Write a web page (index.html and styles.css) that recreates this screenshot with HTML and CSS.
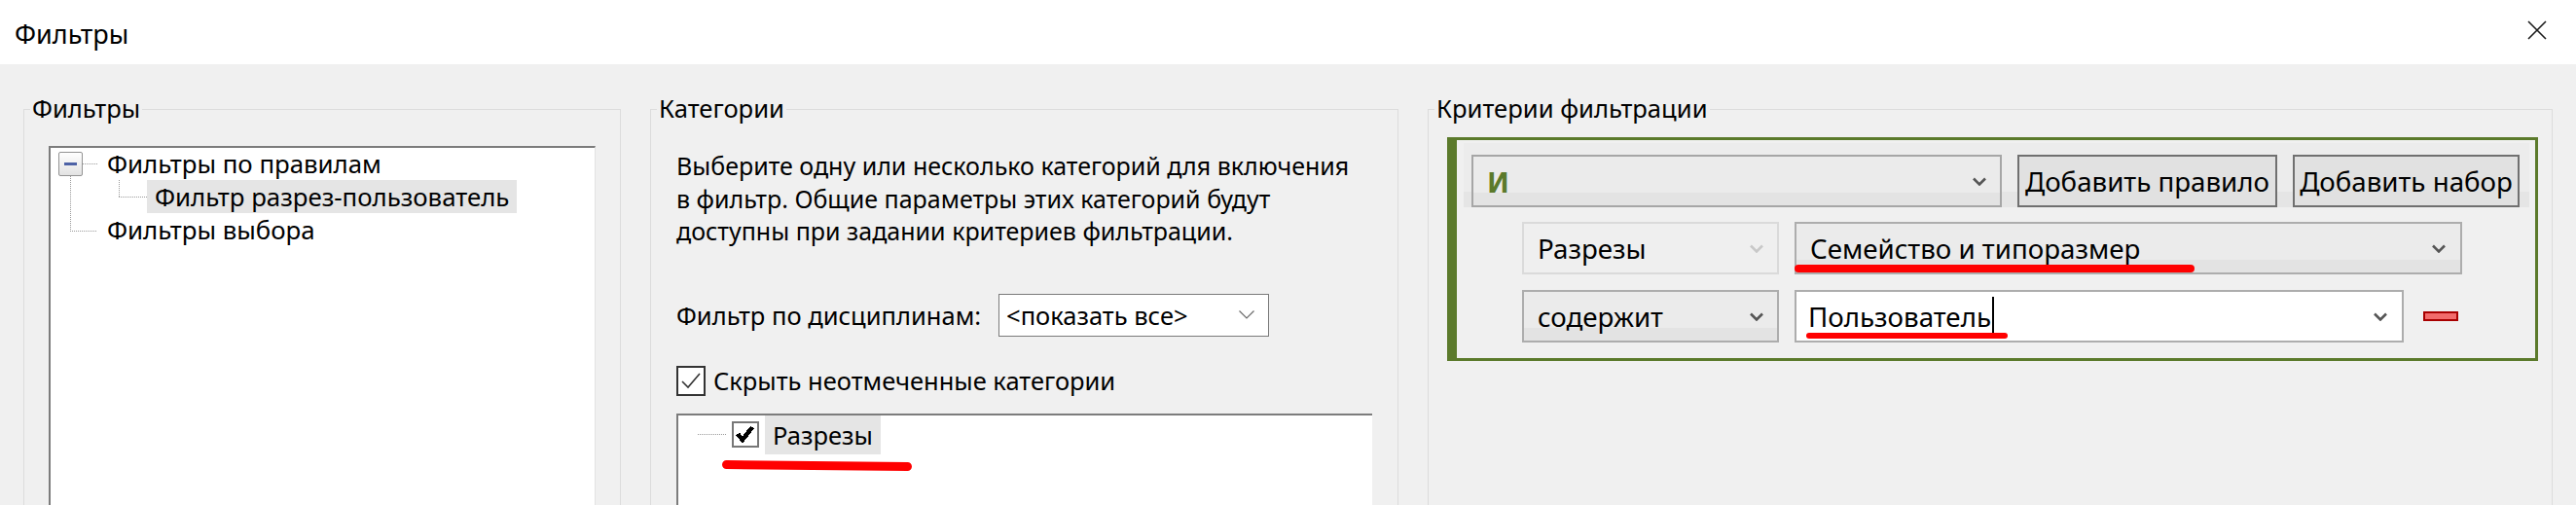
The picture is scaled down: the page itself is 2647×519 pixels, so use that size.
FILE: index.html
```html
<!DOCTYPE html>
<html lang="ru">
<head>
  <meta charset="UTF-8" />
  <title>Фильтры</title>
  <link rel="stylesheet" href="styles.css">
</head>
<body>

  <!-- Window caption -->
  <header class="titlebar">
    <span class="title">Фильтры</span>
    <button class="close" title="Закрыть">
      <svg width="20" height="20" viewBox="0 0 20 20"><path d="M1 1L19 19M19 1L1 19" stroke="#1b1b1b" stroke-width="1.6"/></svg>
    </button>
  </header>

  <main class="panes">

    <!-- Filters tree -->
    <fieldset class="group group-filters">
      <legend>Фильтры</legend>
      <div class="tree">
        <div class="tree-row">
          <svg class="gutter" width="58" height="34" viewBox="0 0 58 34">
            <defs>
              <linearGradient id="exp" x1="0" y1="0" x2="0" y2="1">
                <stop offset="0" stop-color="#ffffff"/>
                <stop offset="1" stop-color="#e2e2e2"/>
              </linearGradient>
            </defs>
            <path d="M33 17.5H48M20.5 30V34" stroke="#9a9a9a" stroke-dasharray="1 1"/>
            <rect x="8.5" y="5.5" width="24" height="24" rx="1.5" fill="url(#exp)" stroke="#939393"/>
            <rect x="14" y="16" width="13" height="3" fill="#4d62a6"/>
          </svg>
          <span>Фильтры по правилам</span>
        </div>
        <div class="tree-row">
          <svg class="gutter" width="99" height="34" viewBox="0 0 99 34">
            <path d="M20.5 0V34M70.5 0V17M70 17.5H99" stroke="#9a9a9a" stroke-dasharray="1 1"/>
          </svg>
          <span class="sel">Фильтр разрез-пользователь</span>
        </div>
        <div class="tree-row">
          <svg class="gutter" width="58" height="34" viewBox="0 0 58 34">
            <path d="M20.5 0V18M20 18.5H48" stroke="#9a9a9a" stroke-dasharray="1 1"/>
          </svg>
          <span>Фильтры выбора</span>
        </div>
      </div>
    </fieldset>

    <!-- Categories -->
    <fieldset class="group group-cats">
      <legend>Категории</legend>
      <div class="cat-body">
        <p class="hint">Выберите одну или несколько категорий для включения<br>в фильтр. Общие параметры этих категорий будут<br>доступны при задании критериев фильтрации.</p>

        <div class="discipline">
          <span>Фильтр по дисциплинам:</span>
          <div class="select-plain">
            <span>&lt;показать все&gt;</span>
            <svg width="16" height="9" viewBox="0 0 16 9"><path d="M0.5 0.5L8 8L15.5 0.5" fill="none" stroke="#6b6b6b" stroke-width="1.2"/></svg>
          </div>
        </div>

        <label class="check-row">
          <span class="checkbox">
            <svg width="26" height="27" viewBox="0 0 26 27"><path d="M4 14L10 20L22 6" fill="none" stroke="#333" stroke-width="1.6"/></svg>
          </span>
          Скрыть неотмеченные категории
        </label>

        <div class="cat-list">
          <div class="cat-row">
            <span class="dots"></span>
            <span class="cat-check">
              <svg width="24" height="23" viewBox="0 0 24 23" shape-rendering="crispEdges"><path d="M4 11L9 17L19 4" fill="none" stroke="#000" stroke-width="4.5"/></svg>
            </span>
            <span class="sel">Разрезы</span>
          </div>
          <span class="mark mark-cat"></span>
        </div>
      </div>
    </fieldset>

    <!-- Filter rules -->
    <fieldset class="group group-rules">
      <legend>Критерии фильтрации</legend>
      <div class="rules">
        <div class="rules-bar">
          <div class="combo combo-and">
            <span class="and">И</span>
            <svg width="14" height="9" viewBox="0 0 14 9"><path d="M1 1.5L7 7.5L13 1.5" fill="none" stroke="#555" stroke-width="2.6"/></svg>
          </div>
          <button class="btn btn-rule">Добавить правило</button>
          <button class="btn btn-set">Добавить набор</button>
        </div>

        <div class="rule-row">
          <div class="combo combo-cat disabled">
            <span>Разрезы</span>
            <svg width="14" height="9" viewBox="0 0 14 9"><path d="M1 1.5L7 7.5L13 1.5" fill="none" stroke="#c8c8c8" stroke-width="2.6"/></svg>
          </div>
          <div class="combo combo-param">
            <span>Семейство и типоразмер</span>
            <svg width="14" height="9" viewBox="0 0 14 9"><path d="M1 1.5L7 7.5L13 1.5" fill="none" stroke="#555" stroke-width="2.6"/></svg>
            <span class="mark mark-param"></span>
          </div>
        </div>

        <div class="rule-row">
          <div class="combo combo-cat">
            <span>содержит</span>
            <svg width="14" height="9" viewBox="0 0 14 9"><path d="M1 1.5L7 7.5L13 1.5" fill="none" stroke="#555" stroke-width="2.6"/></svg>
          </div>
          <div class="combo combo-value">
            <span class="value">Пользователь<span class="caret"></span></span>
            <svg width="14" height="9" viewBox="0 0 14 9"><path d="M1 1.5L7 7.5L13 1.5" fill="none" stroke="#555" stroke-width="2.6"/></svg>
            <span class="mark mark-value"></span>
          </div>
          <button class="remove" title="Удалить правило"></button>
        </div>
      </div>
    </fieldset>

  </main>

</body>
</html>
```

FILE: styles.css
```css
* {
  margin: 0;
  padding: 0;
  box-sizing: border-box;
}

html, body {
  width: 2647px;
  height: 519px;
  overflow: hidden;
}

body {
  background: #f0f0f0;
  font-family: "Noto Sans", "Open Sans", sans-serif;
  color: #000;
}

/* caption */
.titlebar {
  height: 66px;
  background: #fff;
  display: flex;
  align-items: center;
  justify-content: space-between;
  padding: 0 30px 0 15px;
}

.title {
  font-size: 27px;
  margin-top: 2px;
}

.close {
  display: flex;
  border: none;
  background: none;
  margin-top: -4px;
}

/* group boxes */
.panes {
  display: flex;
  gap: 30px;
  padding: 31px 0 0 24px;
}

.group {
  flex: none;
  min-width: 0;
  height: 480px;
  padding: 0;
  border: 1px solid #dcdcdc;
}

.group legend {
  font-size: 25.6px;
  line-height: 30px;
  margin-left: 6px;
  padding: 0 2px;
}

.group-filters { width: 614px; }
.group-cats { width: 769px; }
.group-rules { width: 1156px; }

/* filters tree */
.tree {
  margin: 23px 0 0 25px;
  width: 562px;
  height: 400px;
  background: #fff;
  border-top: 2px solid #7c7c7c;
  border-left: 2px solid #7c7c7c;
  border-right: 1px solid #e3e3e3;
}

.tree-row {
  display: flex;
  align-items: center;
  height: 34px;
  font-size: 25.8px;
  white-space: nowrap;
}

.tree-row:first-child {
  margin-top: -1px;
}

.gutter {
  flex: none;
}

.sel {
  background: #e5e5e5;
  padding: 0 8px;
}

.tree-row .sel {
  height: 34px;
  line-height: 34px;
}

/* categories */
.cat-body {
  padding-left: 26px;
  font-size: 25.5px;
}

.hint {
  margin-top: 27px;
  font-size: 25px;
  line-height: 33.5px;
  white-space: nowrap;
}

.discipline {
  display: flex;
  align-items: center;
  gap: 18px;
  height: 44px;
  margin-top: 47px;
}

.select-plain {
  width: 278px;
  height: 44px;
  display: flex;
  align-items: center;
  justify-content: space-between;
  padding: 0 14px 0 7px;
  background: #fff;
  border: 1.5px solid #7a7a7a;
}

.check-row {
  display: flex;
  align-items: center;
  gap: 8px;
  height: 31px;
  margin-top: 30px;
}

.checkbox {
  width: 30px;
  height: 31px;
  display: flex;
  background: #fff;
  border: 2px solid #333;
}

.cat-list {
  position: relative;
  width: 715px;
  height: 200px;
  margin-top: 18px;
  background: #fff;
  border-top: 2px solid #7c7c7c;
  border-left: 2px solid #7c7c7c;
}

.cat-row {
  display: flex;
  align-items: center;
  height: 40px;
}

.cat-row .dots {
  width: 29px;
  margin: 0 6px 0 20px;
  border-top: 1px dotted #9a9a9a;
}

.cat-check {
  width: 28px;
  height: 27px;
  display: flex;
  margin-right: 6px;
  background: #fff;
  border: 2px solid #777;
}

.cat-row .sel {
  height: 40px;
  line-height: 40px;
}

/* red pen marks */
.mark {
  position: absolute;
  background: #ff0000;
  border-radius: 5px;
}

.mark-cat {
  left: 45px;
  top: 47px;
  width: 195px;
  height: 9px;
  transform: rotate(0.6deg);
}

.mark-param {
  left: -2px;
  bottom: 0;
  width: 411px;
  height: 8px;
}

.mark-value {
  left: 10px;
  bottom: 2px;
  width: 207px;
  height: 6px;
}

/* filter rules */
.rules {
  width: 1121px;
  margin: 14px 0 0 19px;
  padding-bottom: 16px;
  border: 3px solid #5b7a2b;
  border-left-width: 10px;
}

.rules-bar {
  display: flex;
  gap: 16px;
  height: 66px;
  margin: 3px 6px 0 7px;
  padding: 12px 0 0 8px;
  background: linear-gradient(#ececec 0 76%, #e5e5e5 76%);
}

.rule-row {
  display: flex;
  align-items: center;
  gap: 16px;
  height: 54px;
  margin: 16px 0 0 67px;
}

.rules-bar + .rule-row {
  margin-top: 15px;
}

.combo {
  position: relative;
  flex: none;
  height: 54px;
  display: flex;
  align-items: center;
  justify-content: space-between;
  padding: 0 15px 0 14px;
  font-size: 27.7px;
  white-space: nowrap;
  background: linear-gradient(#ebebeb 0 74%, #e3e3e3 74%);
  border: 2px solid #adadad;
}

.combo-and {
  width: 545px;
  padding-right: 14px;
  border-color: #a6a6a6;
}

.and {
  color: #5b7a2b;
  font-weight: 700;
  font-size: 29px;
}

.combo-cat {
  width: 264px;
  padding-right: 14px;
}

.combo.disabled {
  background: #efefef;
  border-color: #dadada;
}

.combo-param {
  width: 686px;
}

.combo-value {
  width: 626px;
  padding-left: 12px;
  background: #fff;
}

.value {
  display: flex;
  align-items: center;
}

.caret {
  width: 2px;
  height: 41px;
  margin-left: 1px;
  background: #000;
}

.btn {
  height: 54px;
  font-family: inherit;
  font-size: 27.7px;
  color: #000;
  background: #e1e1e1;
  border: 2px solid #707070;
  white-space: nowrap;
}

.btn-rule { width: 267px; }
.btn-set { width: 233px; }

.remove {
  width: 36px;
  height: 10px;
  margin-left: 4px;
  background: #f26b6b;
  border: 2px solid #a80000;
}
```
